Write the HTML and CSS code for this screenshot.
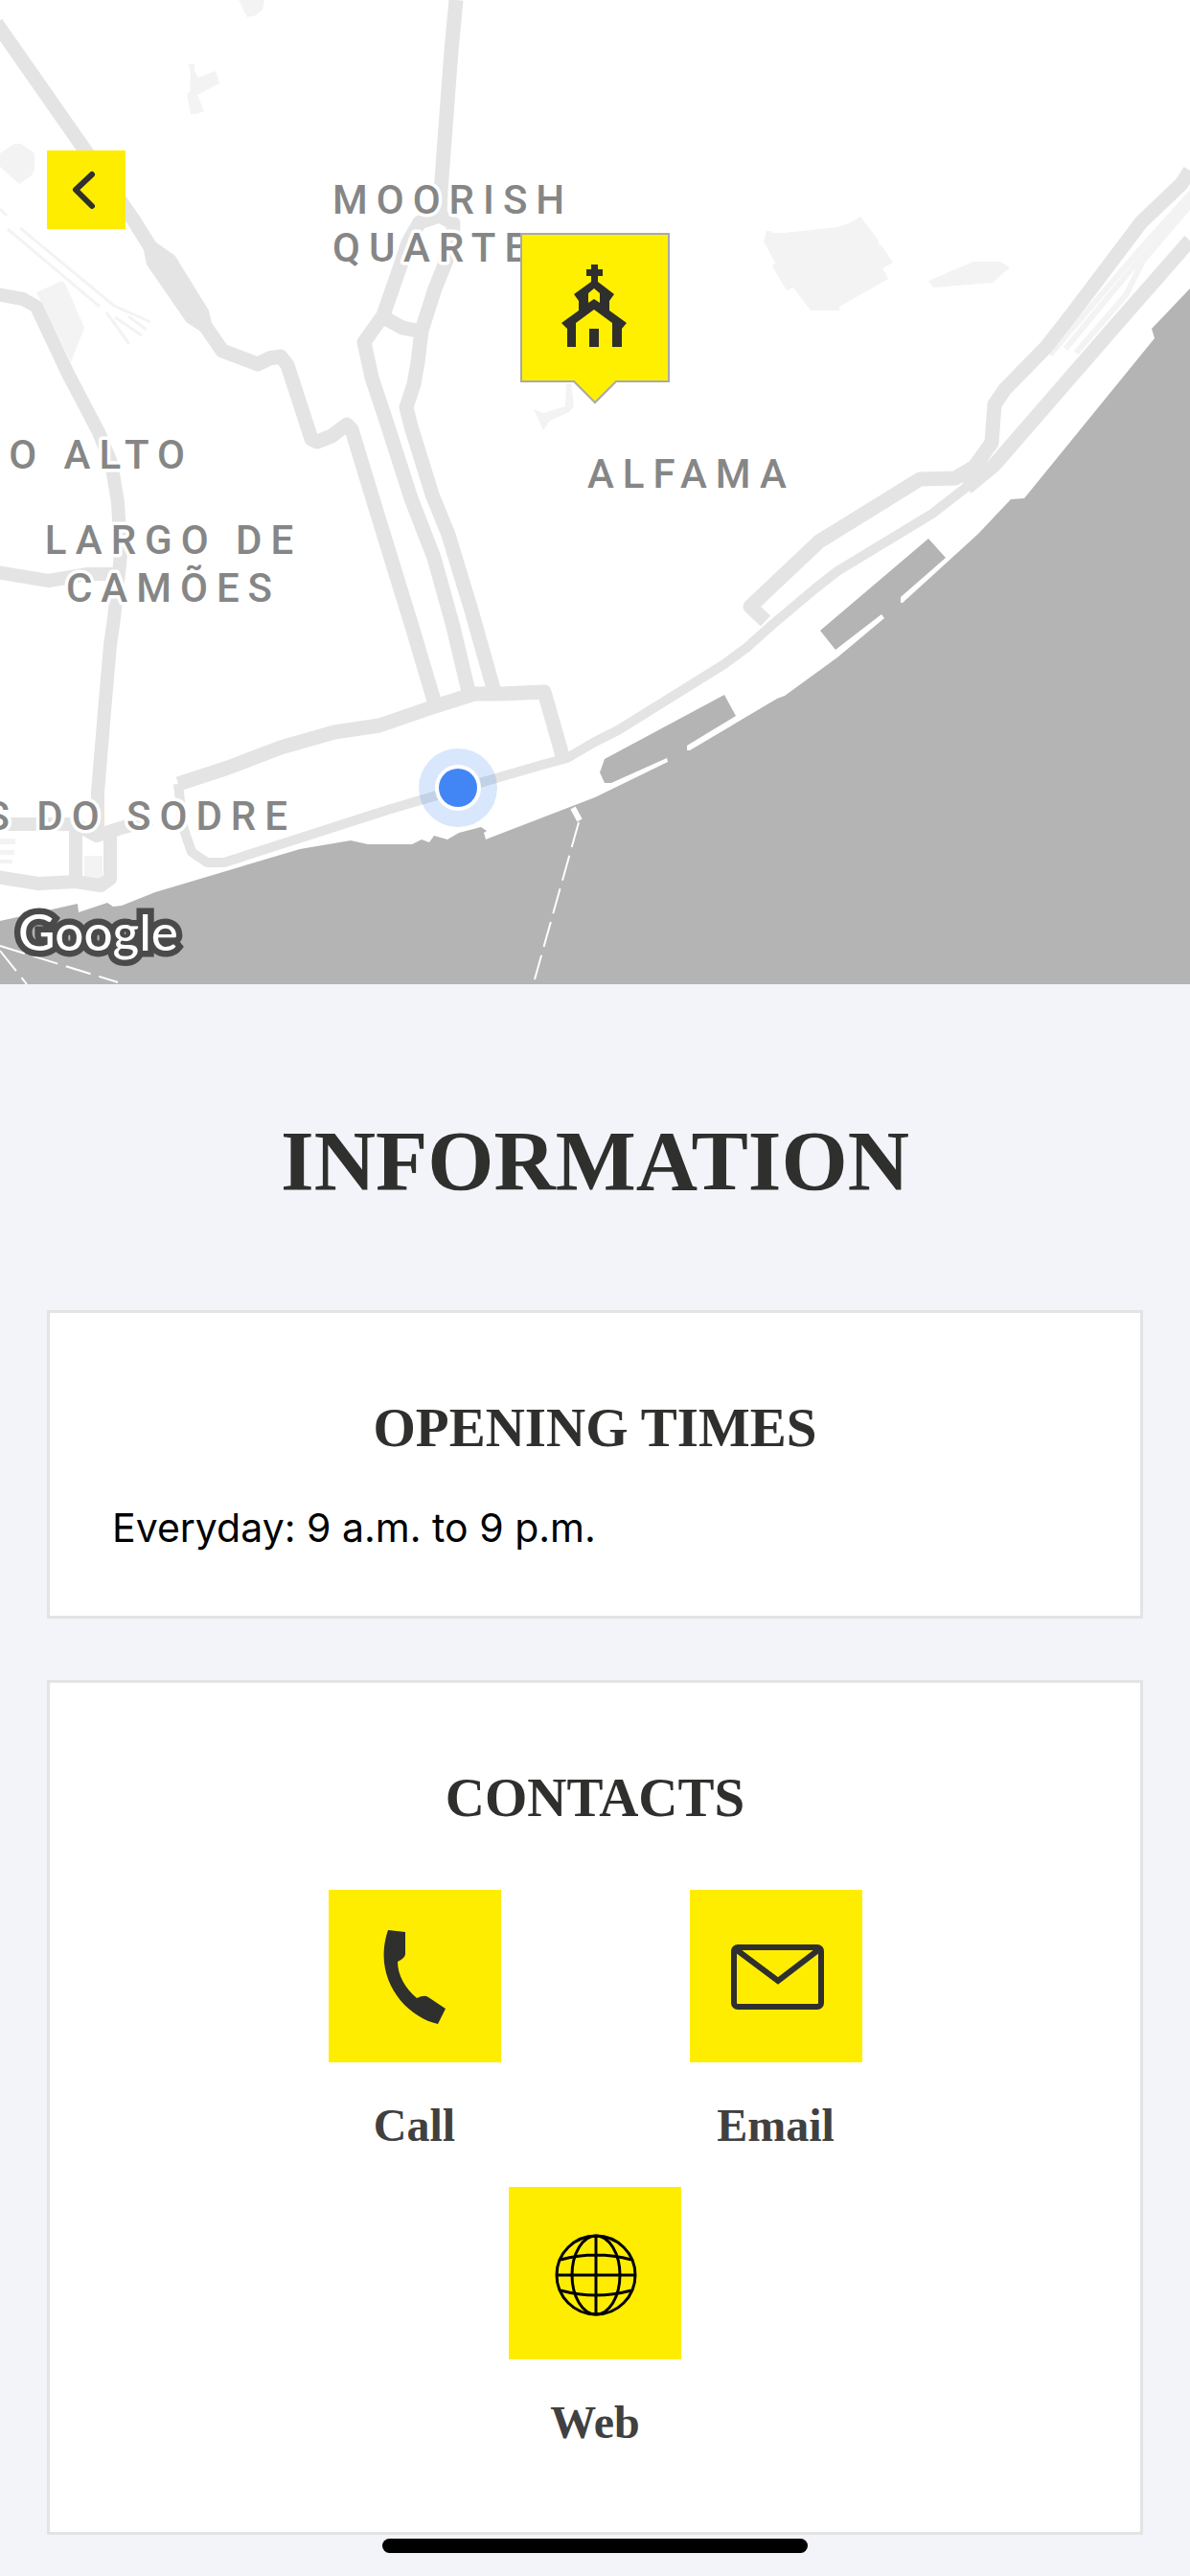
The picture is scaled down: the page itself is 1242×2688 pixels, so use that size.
FILE: index.html
```html
<!DOCTYPE html>
<html lang="en">
<head>
    <meta charset="UTF-8">
    <meta name="viewport" content="width=device-width, initial-scale=1.0">
    <title>Information</title>
    <link rel="stylesheet" href="styles.css">
</head>
<body>
    <header class="map">
        <svg class="map-canvas" viewBox="0 0 1242 1027" role="img" aria-label="Map">
            <!-- parks and squares -->
            <g class="park">
                <path d="M249 0h27l-2 10-7 6-9 2z"/>
                <path d="M197 67h6v7l4 7 18-7 4 13-23 12 7 17-8 3h-6l-4-21 4-3-1-9 1-9z"/>
                <path d="M0 160l15-10h7l14 10v16l-3 7-13 9-20-18z"/>
                <path d="M38 305l27-12 4 5 19 44-14 36z"/>
                <path d="M797 252l3-11h5v2h14l55-6 12-4 12-7 19 25v4l3 1 12 18-11 6 6 11-51 29v4h-30l-18-24-7 3-15-25 3-4z"/>
                <path d="M969 293l47-20h28l10 6-18 16-62 5z"/>
                <path d="M557 427l10 4 23-7 1-24h5l3 24-5 6-20 9-7 10z"/>
                <path d="M88 893h19v24H88z"/>
                <path d="M0 875h16v6H0zM0 887h15v5H0zM0 897h13v4H0z"/>
            </g>
            <!-- rail tracks -->
            <g class="rail">
                <path d="M0 218l7 7M8 239l96 81M21 238l98 81 38 17M111 326l24 33M120 331l28 19M134 330l19 14"/>
            </g>
            <g class="rail rail-wide">
                <path d="M1096 370l94-110 56-62M1112 364l76-92 58-68M1123 368l52-60 18-36 53-62"/>
            </g>
            <!-- main roads -->
            <g class="road">
                <path d="M-4 24L75 137l64 92 18 29M157 258l3 15 40 58 14 9M157 258l20 14 34 55 3 13 18 26 37 14 12-6 12-2 7 9 25 77 6 3 15-6 16-12 5 5 24 79 40 130 24 81"/>
                <path d="M476 0l-5 53-11 147-1 25M459 225l-21 7-12 21-8 24-18 52-20 28 8 37 14 42 27 84 24 62 20 72 17 72"/>
                <path d="M459 225l14 8-1 22-9 24-9 22-14 44-4 33-4 23-8 24 5 20 22 71 17 42 24 79 24 85M400 331l20 11 20 4"/>
                <path d="M186 818l52-17 55-21 56-16 47-7 55-19 44-14h28l45-2 20 70"/>
                <path d="M799 648l-16-15 72-68 97-60 8-5 37-1 20-12 18-25 3-40 11-16 43-44 28-36 28-37 43-57 42-40 9-14M1009 509l28-23 119-137 86-98"/>
            </g>
            <g class="road road-mid">
                <path d="M-4 307l28 5 14 8 33 70 32 61 13 32 7 41 3 55-7 66-4 28-6 69-7 85v45M-4 597l55 9 40-7h35M-4 860h83l22 12 22-7 35-10M79 865v55l26 4 10-7v-50M-4 915l44 7 39-2"/>
            </g>
            <path class="road road-thin" d="M186 818l5 45 9 26 16 11h18l174-56 158-46 26-7 29-17 24-12 111-69 23-17 28-25 44-37 23-18 99-60 36-28"/>
            <!-- river -->
            <path class="water" d="M1242 301l-40 42 3 10-136 167-14 1-34 36-79 72h-2v-6l47-41-18-20-113 96 16 20 48-37 3 4-49 41-55 40-8 3-91 54h-3v-5l51-31-12-22-125 67-5 14 5 11h7l58-26 1 4-76 37-114 44-2-7 3-2-6-4-23 6-12 7-14-4-5 7-8-3-10 5h-46l-18-4-53 9-151 45-35 14-9 1-6-4-30 10-1-9-81 18v66h1242z"/>
            <path class="pier" d="M598 843l7 13"/>
            <path class="ferry" d="M604 858l-46 164M0 987l123 38M0 992l28 35"/>
            <!-- district names -->
            <g class="district">
                <text x="347" y="223">MOORISH</text>
                <text x="347" y="273">QUARTER</text>
                <text x="613" y="509">ALFAMA</text>
                <text x="202" y="489" text-anchor="end">O ALTO</text>
                <text x="181" y="578" text-anchor="middle">LARGO DE</text>
                <text x="181" y="628" text-anchor="middle">CAMÕES</text>
                <text x="309" y="866" text-anchor="end">S DO SODRE</text>
            </g>
            <text class="google" x="19" y="992">Google</text>
            <!-- current position -->
            <circle class="position-halo" cx="478" cy="822" r="41"/>
            <circle cx="478" cy="822" r="24" fill="#fff"/>
            <circle cx="478" cy="822" r="20" fill="#4286f5"/>
            <!-- church pin -->
            <path class="pin" d="M544 244h154v154h-55l-22 22-22-22h-55z"/>
            <path class="pin-icon" fill-rule="evenodd" d="M617 276h7v5h5v7h-5v6l17 13-5 7v10l18 13-5 6v19h-10v-25l-19-14-19 14v25h-9v-19l-6-6 18-13v-10l-5-7 18-13v-6h-5v-7h5zM614 306v10l6-4 6 4v-10l-6-5zM615 343h10v19h-10z"/>
        </svg>
        <button class="back-btn" type="button" aria-label="Back">
            <svg viewBox="0 0 82 82"><path d="M47 25L30 41l17 17"/></svg>
        </button>
    </header>
    <main class="content">
        <h1>Information</h1>
        <section class="card">
            <h2>Opening times</h2>
            <p>Everyday: 9 a.m. to 9 p.m.</p>
        </section>
        <section class="card">
            <h2>Contacts</h2>
            <div class="contacts">
                <a class="contact" href="#call">
                    <svg class="tile" viewBox="0 0 180 180"><path d="M62 42l18 2v23q0 4-8 8c0 14 8 28 20 38q8-4 12-1l18 12-8 16C80 132 45 92 62 42z" fill="#2f2f2d"/></svg>
                    <span>Call</span>
                </a>
                <a class="contact" href="#email">
                    <svg class="tile" viewBox="0 0 180 180"><g fill="none" stroke="#2f2f2d" stroke-width="6"><rect x="46" y="60" width="91" height="62" rx="4"/><path d="M48 62l44 33 43-33"/></g></svg>
                    <span>Email</span>
                </a>
                <a class="contact" href="#web">
                    <svg class="tile" viewBox="0 0 180 180"><g fill="none" stroke="#000" stroke-width="3"><circle cx="91" cy="92" r="41"/><ellipse cx="91" cy="92" rx="25" ry="41"/><path d="M91 51v82M50 92h82M54 76q37-10 74 0M54 108q37 10 74 0"/></g></svg>
                    <span>Web</span>
                </a>
            </div>
        </section>
    </main>
    <div class="home-indicator"></div>
</body>
</html>
```
FILE: styles.css
```css
* {
    box-sizing: border-box;
}

body {
    margin: 0;
    background-color: #f3f4f9;
    color: #000;
    font-family: Inter, "Liberation Sans", sans-serif;
    font-size: 41px;
}

.map {
    position: relative;
    background-color: #fff;
}

.map-canvas {
    display: block;
    width: 100%;
}

.park {
    fill: #f3f3f3;
}

.rail {
    fill: none;
    stroke: #f3f3f3;
    stroke-width: 3;
}

.rail-wide {
    stroke-width: 6;
}

.road {
    fill: none;
    stroke: #e4e4e4;
    stroke-width: 15;
    stroke-linejoin: round;
}

.road-mid {
    stroke-width: 14;
}

.road-thin {
    stroke-width: 10;
}

.water {
    fill: #b4b4b4;
}

.pier {
    stroke: #fff;
    stroke-width: 6;
}

.ferry {
    fill: none;
    stroke: #fff;
    stroke-width: 2;
    stroke-dasharray: 27 9;
}

.district {
    fill: #868686;
    stroke: #fff;
    stroke-width: 7;
    stroke-linejoin: round;
    paint-order: stroke;
    font-family: Roboto, sans-serif;
    font-size: 42px;
    font-weight: 500;
    letter-spacing: 9px;
}

.google {
    fill: #fff;
    stroke: #4a4a4a;
    stroke-width: 13;
    paint-order: stroke;
    font-family: Lato, sans-serif;
    font-size: 53px;
    font-weight: 500;
}

.position-halo {
    fill: #4286f5;
    fill-opacity: 0.2;
}

.pin {
    fill: #fff000;
    stroke: #a9a9a9;
    stroke-width: 2;
}

.pin-icon {
    fill: #2f2f2d;
}

.back-btn {
    position: absolute;
    top: 157px;
    left: 49px;
    width: 82px;
    height: 82px;
    padding: 0;
    border: none;
    background-color: #ffed00;
    cursor: pointer;
}

.back-btn svg {
    display: block;
    fill: none;
    stroke: #2f2f2d;
    stroke-width: 6;
    stroke-linecap: round;
    stroke-linejoin: round;
}

.content {
    padding: 0 49px 45px;
}

h1, h2 {
    margin: 0;
    color: #2f2f2d;
    font-family: "Liberation Serif", serif;
    text-align: center;
    text-transform: uppercase;
}

h1 {
    padding: 134px 0 106px;
    font-size: 89px;
    line-height: 100px;
}

h2 {
    font-size: 57px;
    line-height: 64px;
}

.card {
    padding: 88px 65px 64px;
    border: 3px solid #e3e3e3;
    background-color: #fff;
}

.card + .card {
    margin-top: 64px;
}

.card p {
    margin: 46px 0 2px;
    line-height: 52px;
}

.contacts {
    display: flex;
    flex-wrap: wrap;
    justify-content: center;
    row-gap: 36px;
    max-width: 760px;
    margin: 64px auto 0;
    padding-bottom: 22px;
}

.contact {
    display: flex;
    flex-direction: column;
    align-items: center;
    gap: 38px;
    width: 377px;
    color: #404040;
    font-family: "Liberation Serif", serif;
    font-size: 48px;
    font-weight: bold;
    line-height: 56px;
    text-decoration: none;
}

.tile {
    width: 180px;
    height: 180px;
    background-color: #ffed00;
}

.home-indicator {
    position: fixed;
    bottom: 24px;
    left: 50%;
    width: 444px;
    height: 15px;
    border-radius: 8px;
    background-color: #000;
    transform: translateX(-50%);
}
```
